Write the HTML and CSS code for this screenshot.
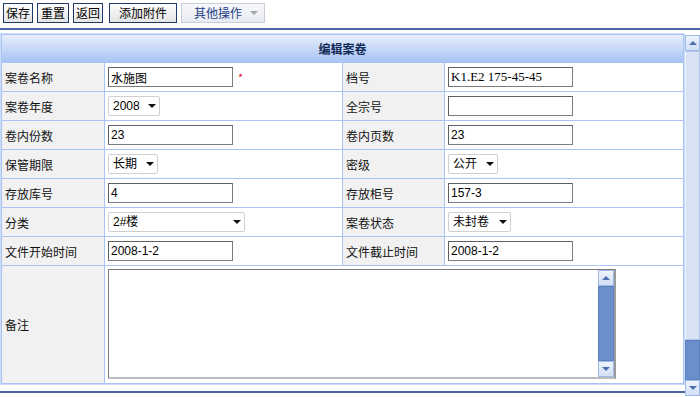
FILE: index.html
```html
<!DOCTYPE html>
<html>

<head>
  <meta charset="UTF-8">
  <title>编辑案卷</title>
  <link rel="stylesheet" href="styles.css">
</head>

<body>

  <div class="toolbar">
    <button class="btn">保存</button>
    <button class="btn btn-mid">重置</button>
    <button class="btn">返回</button>
    <button class="btn btn-wide">添加附件</button>
    <button class="btn btn-menu">其他操作<span class="caret"></span></button>
  </div>

  <div class="main">
    <div class="content">
      <div class="panel">
        <div class="form-grid">
          <div class="title">编辑案卷</div>

          <div class="lbl">案卷名称</div>
          <div class="val"><input class="txt" value="水施图"><span class="req">*</span></div>
          <div class="lbl">档号</div>
          <div class="val"><input class="txt serif" value="K1.E2 175-45-45"></div>

          <div class="lbl">案卷年度</div>
          <div class="val"><span class="sel"><select class="w52"><option>2008</option></select></span></div>
          <div class="lbl">全宗号</div>
          <div class="val"><input class="txt" value=""></div>

          <div class="lbl">卷内份数</div>
          <div class="val"><input class="txt" value="23"></div>
          <div class="lbl">卷内页数</div>
          <div class="val"><input class="txt" value="23"></div>

          <div class="lbl">保管期限</div>
          <div class="val"><span class="sel"><select class="w50"><option>长期</option></select></span></div>
          <div class="lbl">密级</div>
          <div class="val"><span class="sel"><select class="w50"><option>公开</option></select></span></div>

          <div class="lbl">存放库号</div>
          <div class="val"><input class="txt" value="4"></div>
          <div class="lbl">存放柜号</div>
          <div class="val"><input class="txt" value="157-3"></div>

          <div class="lbl">分类</div>
          <div class="val"><span class="sel"><select class="w137"><option>2#楼</option></select></span></div>
          <div class="lbl">案卷状态</div>
          <div class="val"><span class="sel"><select class="w63"><option>未封卷</option></select></span></div>

          <div class="lbl">文件开始时间</div>
          <div class="val"><input class="txt" value="2008-1-2"></div>
          <div class="lbl">文件截止时间</div>
          <div class="val"><input class="txt" value="2008-1-2"></div>

          <div class="lbl">备注</div>
          <div class="val val-memo">
            <div class="memo">
              <textarea></textarea>
              <div class="memo-scroll">
                <div class="sb-btn"><span class="tri-up"></span></div>
                <div class="sb-thumb sb-fill"></div>
                <div class="sb-btn"><span class="tri-down"></span></div>
              </div>
            </div>
          </div>
        </div>
      </div>
      <div class="foot-line"></div>
    </div>

    <div class="vscroll">
      <div class="sb-btn"><span class="tri-up"></span></div>
      <div class="sb-track"></div>
      <div class="sb-thumb sb-page"></div>
      <div class="sb-btn"><span class="tri-down"></span></div>
    </div>
  </div>

</body>

</html>
```

FILE: styles.css
```css
body {
  margin: 0;
  background: #fff;
  color: #000;
  font-family: "Noto Sans CJK SC", "Liberation Sans", sans-serif;
  font-size: 12px;
}

/* top toolbar */
.toolbar {
  display: flex;
  align-items: flex-start;
  gap: 4px;
  height: 25px;
  padding: 3px 0 0 3px;
  border-bottom: 2px solid #4c65a0;
}

.btn {
  height: 20px;
  padding: 0 2px;
  margin: 0;
  border: 1px solid #1f3769;
  background: linear-gradient(#fdfdfd, #e4e4e4);
  font-family: "Noto Sans CJK SC", sans-serif;
  font-size: 12px;
  line-height: 18px;
  color: #000;
}

.btn-mid {
  padding: 0 3px;
}

.btn-wide {
  margin-left: 2px;
  padding: 0 9px;
}

.btn-menu {
  display: flex;
  align-items: center;
  padding: 0 6px 0 12px;
  border-color: #c6ccd9;
  background: linear-gradient(#f7f8fb, #e7eaf1);
  color: #233f86;
}

.caret {
  width: 0;
  height: 0;
  margin-left: 8px;
  border-left: 4px solid transparent;
  border-right: 4px solid transparent;
  border-top: 4px solid #a3a6ad;
}

/* main area under the toolbar */
.main {
  display: flex;
  height: 367px;
}

.content {
  width: 685px;
  padding-top: 3px;
}

.panel {
  border: 1px solid #cddcf8;
}

.form-grid {
  display: grid;
  grid-template-columns: 102px 237px 101px 238px;
  grid-template-rows: 27px repeat(7, 28px) 117px;
  gap: 1px;
  padding: 1px;
  background: #a9c3f3;
}

.title {
  grid-column: 1 / 5;
  display: flex;
  align-items: center;
  justify-content: center;
  background: linear-gradient(#e6eefc, #a7c4f3);
  color: #122a58;
  font-weight: bold;
}

.lbl {
  display: flex;
  align-items: center;
  padding-left: 3px;
  background: #f1f1f1;
  color: #111;
}

.val {
  display: flex;
  align-items: center;
  padding-left: 3px;
  background: #fff;
}

.val-memo {
  grid-column: 2 / 5;
  align-items: flex-start;
  padding-top: 3px;
}

.txt {
  box-sizing: border-box;
  width: 125px;
  height: 20px;
  margin: 0;
  padding: 0 2px;
  border: 1px solid #7c7c7c;
  border-top-color: #5f5f5f;
  border-left-color: #5f5f5f;
  font-family: "Liberation Sans", "Noto Sans CJK SC", sans-serif;
  font-size: 12px;
  color: #000;
}

.txt.serif {
  font-family: "Liberation Serif", serif;
  font-size: 13px;
}

.req {
  margin-left: 5px;
  color: #e02020;
  font-size: 11px;
  line-height: 1;
}

/* select boxes with a drawn arrow */
.sel {
  position: relative;
  display: inline-block;
}

.sel select {
  -webkit-appearance: none;
  appearance: none;
  box-sizing: border-box;
  height: 20px;
  margin: 0;
  padding: 0 0 0 4px;
  border: 1px solid #d0d0d0;
  border-radius: 2px;
  background: #fff;
  font-family: "Liberation Sans", "Noto Sans CJK SC", sans-serif;
  font-size: 12px;
  color: #000;
}

.sel::after {
  content: "";
  position: absolute;
  right: 4px;
  top: 8px;
  border-left: 4px solid transparent;
  border-right: 4px solid transparent;
  border-top: 4px solid #111;
  pointer-events: none;
}

.w50 { width: 50px; }
.w52 { width: 52px; }
.w63 { width: 63px; }
.w137 { width: 137px; }

/* memo field */
.memo {
  box-sizing: border-box;
  display: flex;
  width: 508px;
  height: 110px;
  border: 1px solid #7a7a7a;
  border-right-width: 2px;
  border-bottom-width: 2px;
  border-right-color: #9a9a9a;
  border-bottom-color: #bdbdbd;
}

.memo textarea {
  flex: 1;
  border: none;
  margin: 0;
  padding: 2px;
  resize: none;
  outline: none;
  font-family: "Liberation Sans", "Noto Sans CJK SC", sans-serif;
  font-size: 12px;
}

.memo-scroll {
  display: flex;
  flex-direction: column;
  width: 16px;
}

/* scrollbar pieces */
.sb-btn {
  box-sizing: border-box;
  height: 16px;
  display: flex;
  align-items: center;
  justify-content: center;
  border: 1px solid #a1b9e6;
  background: linear-gradient(#eef3fc, #d3dff5);
}

.tri-up,
.tri-down {
  width: 0;
  height: 0;
  border-left: 4px solid transparent;
  border-right: 4px solid transparent;
}

.tri-up {
  border-bottom: 4px solid #4d6eae;
}

.tri-down {
  border-top: 4px solid #4d6eae;
}

.sb-thumb {
  background: #6a8fcb;
  border: 1px solid #5c81bf;
}

.sb-fill {
  flex: 1;
}

.vscroll {
  display: flex;
  flex-direction: column;
  width: 15px;
  margin-top: 5px;
  height: 361px;
}

.sb-track {
  flex: 1;
  background: #d8e2f5;
  border: 1px solid #b3c6ea;
  border-left-color: #eef3fc;
}

.sb-page {
  height: 38px;
}

.foot-line {
  height: 2px;
  margin-top: 6px;
  background: #4c65a0;
}
```
